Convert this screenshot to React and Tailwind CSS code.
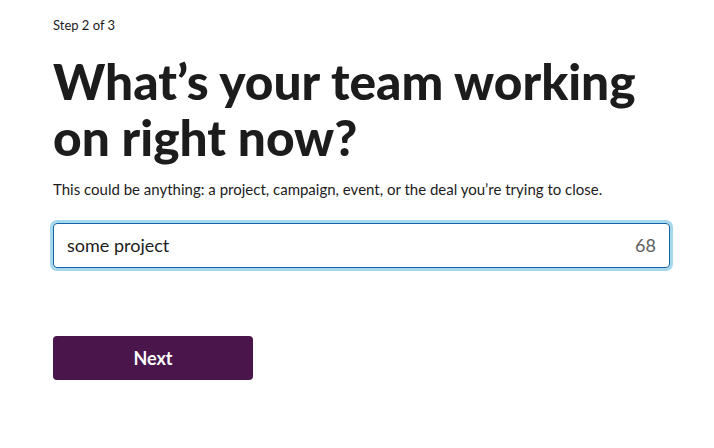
import React, { useState } from 'react';

const App = () => {
  const [name, setName] = useState('some project');

  return (
    <div className="min-h-[448px] bg-white text-[#1d1c1d] font-['Lato',sans-serif]">
      <div className="pl-[53px] pr-[44px] pt-[16px] w-[714px]">
        <p className="text-[13px] leading-[18px]">Step 2 of 3</p>

        <h1 className="mt-[19px] text-[49.6px] leading-[56px] font-black">
          What’s your team working on right now?
        </h1>

        <p className="mt-[13px] text-[15px] leading-[22px]">
          This could be anything: a project, campaign, event, or the deal you’re trying to close.
        </p>

        {/* Name input with focus ring */}
        <div className="mt-[23px] w-[617px] flex items-center h-[45px] rounded-[4px] border border-[#1264a3] shadow-[0_0_0_3px_rgba(29,155,209,0.4)] px-[13px]">
          <input
            value={name}
            onChange={(e) => setName(e.target.value)}
            className="flex-1 outline-none text-[18px] text-[#1d1c1d] bg-transparent font-['Lato',sans-serif]"
          />
          <span className="text-[18px] text-[#616061]">{80 - name.length}</span>
        </div>

        <button className="mt-[68px] w-[200px] h-[44px] rounded-[4px] bg-[#4a154b] text-white text-[18px] font-bold">
          Next
        </button>
      </div>
    </div>
  );
};

export default App;
